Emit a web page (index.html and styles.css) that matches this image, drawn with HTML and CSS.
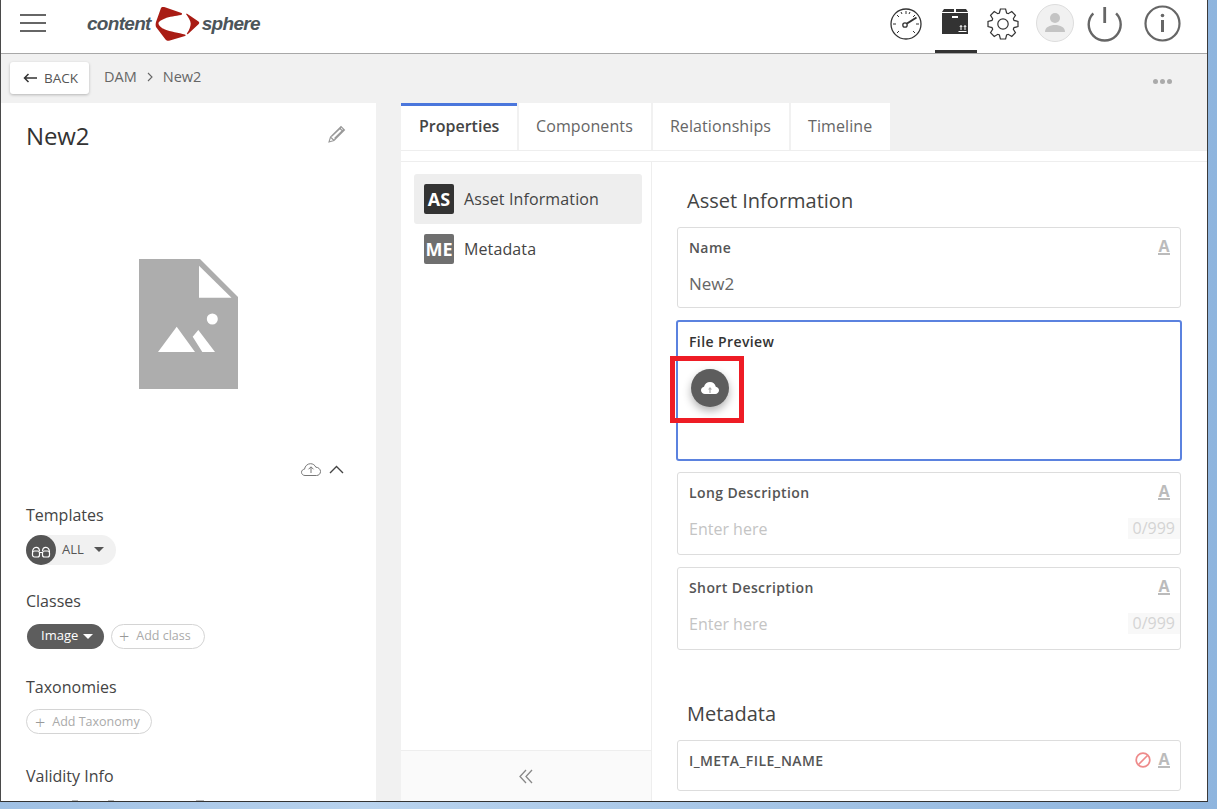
FILE: index.html
```html
<!DOCTYPE html>
<html lang="en">
<head>
<meta charset="utf-8">
<title>DAM - New2</title>
<link rel="stylesheet" href="styles.css">
</head>
<body>
<div class="app">
  <header class="topbar">
    <button class="burger" aria-label="Menu"><span></span><span></span><span></span></button>
    <div class="logo">
      <span class="logo-text">content</span>
      <svg class="logo-mark" width="50" height="36" viewBox="0 0 50 36"><path fill="#a91c14" d="M9.700 1.300C10.500.8 12 1 13 1.300L29.500 7C30.500 7.500 30 8.700 29 9 24 10 17 10.500 13 12.500 8 14.500 6.500 16 6.500 17.500 6.500 19 9 22 13 23.500 18 25.500 27 27 33 28.500 34 29 33.700 29.800 33 30L17 34.700C15.500 35 14.500 34.500 13.500 33.500L4 21C3.500 19.500 3.500 18 4 16L9 2z"/><path fill="#a91c14" d="M34 8C34 7.500 34.800 7.500 35.500 8L46.500 15.500C47.500 16.300 47.500 17.300 46.500 18.200L36 28C35 28.600 34.800 28 35 27.300 37.500 24 38.700 20 38.700 17.500 38.700 14.500 36 11 34 8z"/></svg>
      <span class="logo-text">sphere</span>
    </div>
    <nav class="topicons">
      <svg class="ic-gauge" width="34" height="34" viewBox="0 0 34 34" fill="none" stroke="#333" stroke-width="1.300"><circle cx="17" cy="17" r="15"/><path d="M17 4v3M8 8l2 2M4 17h3M27 17h3M26 8l-2 2M8 26l2-2M26 26l-2-2M21 5l-1 2M12 5l1 2" stroke-width="1"/><circle cx="16" cy="18" r="2.200"/><path d="M18 16.500l9.500-6" stroke-width="2"/></svg>
      <div class="tab-dam">
        <svg width="28" height="28" viewBox="0 0 28 28"><path fill="#333" d="M3 1h10v3H1zM15 1h10l2 3H15zM1 5h26v21H1z"/><path fill="#fff" d="M11 8h6v2h-6z"/><path fill="none" stroke="#fff" stroke-width="1" d="M17.500 23.500h8M20 22v-4.500M24 22v-4.500M18.800 19l1.200-1.500 1.200 1.500M22.800 19l1.200-1.500 1.200 1.500"/></svg>
      </div>
      <svg class="ic-gear" width="32" height="32" viewBox="0 0 32 32" fill="none" stroke="#333" stroke-width="1.200"><circle cx="16" cy="16" r="5.200"/><polygon points="12.400,5 13.400,1 18.600,1 19.600,5 21.230,5.680 24.770,3.550 28.450,7.230 26.320,10.770 27,12.400 31,13.400 31,18.600 27,19.600 26.320,21.230 28.450,24.770 24.770,28.450 21.230,26.320 19.600,27 18.600,31 13.400,31 12.400,27 10.770,26.320 7.230,28.450 3.550,24.770 5.680,21.230 5,19.600 1,18.600 1,13.400 5,12.400 5.680,10.770 3.550,7.230 7.230,3.550 10.770,5.680"/></svg>
      <div class="avatar"><svg width="24" height="24" viewBox="0 0 24 24" fill="#c4c4c4"><circle cx="12" cy="7" r="5"/><path d="M2 21c0-5 5-7 10-7s10 2 10 7z"/></svg></div>
      <svg class="ic-power" width="36" height="37" viewBox="0 0 36 37" fill="none" stroke="#666" stroke-width="2.400"><path d="M6.300 8.300A16 16 0 1 0 29.100 8.300"/><path d="M17.700 2v16" stroke-width="2.800"/></svg>
      <svg class="ic-info" width="37" height="37" viewBox="0 0 37 37" fill="none" stroke="#666" stroke-width="2.200"><circle cx="18.500" cy="18.500" r="17"/><path d="M18.500 15v12" stroke-width="3"/><circle cx="18.500" cy="10.500" r="1.800" fill="#666" stroke="none"/></svg>
    </nav>
  </header>

  <div class="crumbbar">
    <button class="back"><svg width="14" height="10" viewBox="0 0 14 10" fill="none" stroke="#333" stroke-width="1.500"><path d="M14 5H1.500M5.500 1 1.500 5l4 4"/></svg>BACK</button>
    <span class="crumb">DAM</span>
    <svg class="crumb-sep" width="6" height="10" viewBox="0 0 6 10" fill="none" stroke="#666" stroke-width="1.100"><path d="m1 1 4 4-4 4"/></svg>
    <span class="crumb">New2</span>
    <div class="dots"><i></i><i></i><i></i></div>
  </div>

  <main class="workspace">
    <aside class="leftpanel">
      <div class="title-row">
        <h1>New2</h1>
        <svg width="18" height="18" viewBox="0 0 18 18" fill="none" stroke="#999" stroke-width="1.100"><path d="M1 17l1.500-5L13 1.500l3.500 3.500L6 15.500zM2.500 12 6 15.500M11.500 3l3.500 3.500M4 11 13 2.500M6.500 13.500l9-9"/></svg>
      </div>
      <div class="preview">
        <svg width="99" height="130" viewBox="0 0 99 130"><path fill="#adadad" d="M0 0h61l38 38v92H0z"/><path fill="#fff" d="M60 6.700 92.500 38.700H60z"/><circle cx="73.300" cy="60" r="5.500" fill="#fff"/><path fill="#fff" d="M19 93 37.700 67.700 56 93zM53.700 77.700l5.600-6.700L76 93H63.300z"/></svg>
      </div>
      <div class="preview-tools">
        <svg width="20" height="13" viewBox="0 0 20 13" fill="none" stroke="#777" stroke-width="1"><path d="M4 12.500C2 12.500.5 11 .5 9.300s1.300-3 3-3.100C4 3 6.500.7 9.500.7c2.500 0 4.500 1.500 5.300 3.500 2.600 0 4.700 2 4.700 4.300 0 2.300-1.700 4-4 4zM10 10V4M7.500 6.300 10 3.800l2.500 2.500"/></svg>
        <svg width="15" height="9" viewBox="0 0 15 9" fill="none" stroke="#444" stroke-width="1.400"><path d="m1 8 6.500-6.500L14 8"/></svg>
      </div>
      <section class="meta-group g-templates">
        <h2>Templates</h2>
        <div class="template-pill">
          <span class="glasses"><svg width="20" height="13" viewBox="0 0 20 13" fill="none" stroke="#fff" stroke-width="1.200"><rect x="1.500" y="6" width="7" height="6" rx="2"/><rect x="11.500" y="6" width="7" height="6" rx="2"/><path d="M8.500 7.500h3M1.500 7C2 1 8 1 8.500 6M11.500 6C12 1 18 1 18.500 7"/></svg></span>
          <span class="pill-label">ALL</span><i class="caret"></i>
        </div>
      </section>
      <section class="meta-group g-classes">
        <h2>Classes</h2>
        <div class="chips">
          <span class="chip-dark">Image<i class="caret caret-white"></i></span>
          <span class="chip-add"><b>+</b>Add class</span>
        </div>
      </section>
      <section class="meta-group g-tax">
        <h2>Taxonomies</h2>
        <div class="chips chips-tax"><span class="chip-add tax"><b>+</b>Add Taxonomy</span></div>
      </section>
      <section class="meta-group">
        <h2>Validity Info</h2>
        <div class="validity"><i></i><i></i><i></i></div>
      </section>
    </aside>

    <section class="rightpanel">
      <div class="tabs">
        <div class="tab active">Properties</div>
        <div class="tab">Components</div>
        <div class="tab">Relationships</div>
        <div class="tab">Timeline</div>
      </div>
      <div class="tabstrip"></div>
      <div class="columns">
        <div class="sidelist">
          <div class="sideitems">
            <div class="sideitem selected"><span class="badge dark">AS</span>Asset Information</div>
            <div class="sideitem"><span class="badge">ME</span>Metadata</div>
          </div>
          <div class="collapse"><svg width="14" height="15" viewBox="0 0 14 15" fill="none" stroke="#888" stroke-width="1.300"><path d="M7 1 1 7.500 7 14M13 1 7 7.500l6 6.500"/></svg></div>
        </div>
        <div class="formcol">
          <h3>Asset Information</h3>
          <div class="field f-name">
            <div class="f-head"><label>Name</label><span class="a-ic">A</span></div>
            <div class="f-value">New2</div>
          </div>
          <div class="field f-file">
            <div class="f-head"><label>File Preview</label></div>
            <div class="fab"><svg width="18" height="12" viewBox="0 0 18 12"><path fill="#fff" d="M4 12C2 12 0 10.500 0 8.300 0 6.500 1.300 5 3 4.800 3.800 2 6 0 9 0c2.900 0 5.200 2 5.800 4.700 1.800.3 3.200 1.800 3.200 3.600 0 2-1.600 3.700-3.700 3.700z"/><path fill="#aaa" d="M9 5 7 7.500h1.400V11h1.200V7.500H11z"/></svg></div>
          </div>
          <div class="field f-text">
            <div class="f-head"><label>Long Description</label><span class="a-ic">A</span></div>
            <div class="f-row"><span class="placeholder">Enter here</span><span class="count">0/999</span></div>
          </div>
          <div class="field f-text">
            <div class="f-head"><label>Short Description</label><span class="a-ic">A</span></div>
            <div class="f-row"><span class="placeholder">Enter here</span><span class="count">0/999</span></div>
          </div>
          <h3 class="h-meta">Metadata</h3>
          <div class="field f-meta">
            <div class="f-head"><label>I_META_FILE_NAME</label><span class="f-icons"><svg width="16" height="16" viewBox="0 0 16 16" fill="none" stroke="#ee8b8b" stroke-width="1.700"><circle cx="8" cy="8" r="6.800"/><path d="M3.500 12.500l9-9"/></svg><span class="a-ic">A</span></span></div>
          </div>
        </div>
      </div>
    </section>
  </main>
  <div class="annotation" aria-hidden="true"></div>
</div>
</body>
</html>
```

FILE: styles.css
```css
* { box-sizing: border-box; }
html, body { height: 100%; }
body {
  margin: 0;
  height: 809px;
  overflow: hidden;
  background: linear-gradient(90deg, #9fc0e4, #b9d3ee 30%, #8fb5de);
  font-family: "Open Sans", "Noto Sans", sans-serif;
  color: #333;
}
.app {
  position: relative;
  width: 1208px;
  height: 802px;
  background: #f1f1f1;
  border-left: 1px solid #4a4a4a;
  border-right: 1px solid #3a3a3a;
  border-bottom: 1px solid #333;
  display: flex;
  flex-direction: column;
  overflow: hidden;
}
.topbar {
  height: 54px;
  flex: none;
  background: #fff;
  border-bottom: 1px solid #a8a8a8;
  display: flex;
  align-items: center;
  padding-left: 19px;
}
.burger {
  width: 26px;
  height: 18px;
  padding: 0;
  border: 0;
  background: none;
  display: flex;
  flex-direction: column;
  justify-content: space-between;
  margin-bottom: 7px;
}
.burger span { display: block; height: 2px; background: #666; }
.logo {
  display: flex;
  align-items: center;
  margin-left: 41px;
  margin-bottom: 5px;
}
.logo-text {
  font-family: "Liberation Sans", sans-serif;
  font-style: italic;
  font-weight: 700;
  font-size: 19px;
  letter-spacing: -0.7px;
  color: #4c555a;
}
.logo-mark { margin: 0 0 0 1px; }
.topicons {
  margin-left: auto;
  width: 318px;
  height: 53px;
  display: flex;
  align-items: flex-start;
  padding-top: 7px;
}
.ic-gauge { flex: none; }
.tab-dam {
  width: 42px;
  height: 53px;
  margin-left: 12px;
  margin-top: -7px;
  padding: 8px 0 0 6px;
  border-bottom: 3px solid #333;
  flex: none;
  overflow: hidden;
}
.tab-dam svg { display: block; }
.ic-gear { margin-left: 10px; margin-top: 1px; flex: none; }
.avatar {
  width: 38px;
  height: 38px;
  border-radius: 50%;
  background: #f1f1f1;
  border: 1px solid #ddd;
  margin-left: 17px;
  margin-top: -3px;
  display: flex;
  align-items: center;
  justify-content: center;
  flex: none;
}
.ic-power { margin-left: 13px; margin-top: -2px; flex: none; }
.ic-info { margin-left: 21px; margin-top: -2px; flex: none; }

.crumbbar {
  height: 49px;
  flex: none;
  display: flex;
  align-items: center;
  padding-left: 9px;
  padding-right: 35px;
  font-size: 14.500px;
  color: #666;
}
.back {
  width: 79px;
  height: 32px;
  position: relative;
  top: -1px;
  background: #fff;
  border: 0;
  border-radius: 3px;
  box-shadow: 0 1px 3px rgba(0, 0, 0, .25);
  font: 13.500px "Open Sans", sans-serif;
  color: #555;
  display: flex;
  align-items: center;
  gap: 7px;
  padding: 0 0 0 13px;
  margin-right: 15px;
}
.crumb { position: relative; top: -2px; }
.crumb-sep { margin: 0 10px 0 10px; position: relative; top: -2px; }
.dots { margin-left: auto; display: flex; gap: 2px; position: relative; top: 3px; }
.dots i { width: 5px; height: 5px; border-radius: 50%; background: #aaa; }

.workspace { flex: 1; min-height: 0; display: flex; }
.leftpanel {
  width: 375px;
  flex: none;
  background: #fff;
  padding: 0 26px 0 25px;
  overflow: hidden;
}
.title-row {
  display: flex;
  justify-content: space-between;
  padding-top: 16px;
  height: 156px;
  align-items: flex-start;
}
.title-row h1 { margin: 0; font-size: 24px; font-weight: 400; line-height: 33px; letter-spacing: -.1px; color: #333; }
.title-row svg { margin: 6px 4px 0 0; }
.preview { padding-left: 113px; height: 200px; }
.preview svg { display: block; }
.preview-tools {
  display: flex;
  justify-content: flex-end;
  align-items: center;
  gap: 8px;
  height: 14px;
  padding-right: 6px;
  margin-top: 3px;
  margin-bottom: 28px;
}
.meta-group { margin-bottom: 21px; }
.meta-group h2 { margin: 0; font-size: 16px; font-weight: 400; line-height: 22px; color: #444; }
.g-templates { margin-bottom: 25px; }
.g-classes { margin-bottom: 27px; }
.g-tax { margin-bottom: 31px; }
.template-pill {
  margin-top: 9px;
  width: 90px;
  height: 30px;
  border-radius: 15px;
  background: #f1f1f1;
  display: flex;
  align-items: center;
  font-size: 13px;
  color: #555;
}
.pill-label { margin-bottom: 2px; }
.glasses {
  width: 30px;
  height: 30px;
  border-radius: 50%;
  background: #555;
  display: flex;
  align-items: center;
  justify-content: center;
  margin-right: 6px;
  padding-top: 2px;
}
.caret {
  display: inline-block;
  width: 0;
  height: 0;
  border: 5px solid transparent;
  border-top: 5px solid #555;
  border-bottom: 0;
  margin: 0 0 2px 10px;
}
.caret-white { border-top-color: #fff; margin: 3px 0 0 5px; }
.chips { display: flex; gap: 7px; margin-top: 12px; height: 25px; }
.chips-tax { margin-top: 11px; }
.chip-dark {
  height: 25px;
  width: 77px;
  margin-left: 1px;
  border-radius: 13px;
  background: #5d5d5d;
  color: #fff;
  font-size: 13px;
  display: flex;
  align-items: center;
  padding: 0 0 3px 14px;
}
.chip-add {
  height: 25px;
  width: 94px;
  border: 1px solid #d4d4d4;
  border-radius: 13px;
  color: #aaa;
  font-size: 12.500px;
  display: flex;
  align-items: center;
  padding: 0 0 2px 7px;
}
.chip-add b { font-weight: 300; font-size: 18px; line-height: 18px; margin-right: 7px; color: #999; }
.chip-add.tax { width: 126px; padding: 0 0 0 8px; }
.validity { display: flex; margin-top: 13px; padding-left: 46px; }
.validity i { display: block; width: 6px; height: 2px; background: #bbb; }
.validity i + i { margin-left: 30px; }
.validity i:last-child { margin-left: 82px; width: 8px; }

.rightpanel {
  margin-left: 25px;
  width: 806px;
  flex: none;
  display: flex;
  flex-direction: column;
  background: #fff;
}
.tabs { display: flex; gap: 2px; height: 47px; flex: none; background: #f1f1f1; }
.tab {
  background: #fff;
  padding: 0 18px 2px 17px;
  display: flex;
  align-items: center;
  font-size: 16px;
  letter-spacing: .1px;
  color: #666;
}
.tab.active {
  border-top: 3px solid #4a76dc;
  font-weight: 600;
  color: #444;
  padding: 0 18px 5px;
  width: 116px;
  letter-spacing: 0;
}
.tabstrip { height: 12px; flex: none; border-top: 1px solid #eee; border-bottom: 1px solid #eee; }
.columns { flex: 1; min-height: 0; display: flex; }
.sidelist {
  width: 251px;
  flex: none;
  border-right: 1px solid #eee;
  display: flex;
  flex-direction: column;
}
.sideitems { flex: 1; padding: 12px 9px 0 13px; }
.sideitem {
  height: 50px;
  display: flex;
  align-items: center;
  padding-left: 10px;
  font-size: 16px;
  letter-spacing: .12px;
  color: #444;
  border-radius: 3px;
}
.sideitem.selected { background: #eee; }
.badge {
  width: 30px;
  height: 30px;
  border-radius: 2px;
  background: #6f6f6f;
  color: #fff;
  font-weight: 700;
  font-size: 18px;
  letter-spacing: 0;
  display: flex;
  align-items: center;
  justify-content: center;
  margin-right: 10px;
}
.badge.dark { background: #333; }
.collapse {
  height: 51px;
  flex: none;
  border-top: 1px solid #eee;
  background: #fafafa;
  display: flex;
  align-items: center;
  justify-content: center;
}
.formcol { flex: 1; padding: 0 26px 0 25px; overflow: hidden; }
.formcol h3 {
  margin: 0;
  padding-left: 10px;
  font-size: 20px;
  font-weight: 400;
  line-height: 27px;
  color: #444;
  padding-top: 25px;
  height: 65px;
}
.formcol h3.h-meta { height: 78px; padding-top: 38px; }
.field {
  border: 1px solid #ddd;
  border-radius: 3px;
  background: #fff;
  padding: 9px 5px 0 11px;
  margin-bottom: 12px;
}
.f-head { display: flex; justify-content: space-between; align-items: center; height: 20px; }
.f-head label { font-size: 14px; font-weight: 600; letter-spacing: .4px; color: #555; }
.a-ic {
  font-size: 16px;
  font-weight: 700;
  line-height: 13px;
  color: #bbb;
  border-bottom: 2px solid #bbb;
  width: 12px;
  text-align: center;
  margin-right: 5px;
}
.f-icons { display: flex; align-items: center; gap: 7px; }
.f-name { height: 81px; }
.f-value { margin-top: 15px; font-size: 17px; color: #666; }
.f-file {
  height: 141px;
  border: 2px solid #5b82df;
  margin: 0 -1px 11px -1px;
  padding: 9px 6px 0 11px;
}
.f-file label { color: #333; }
.fab {
  width: 38px;
  height: 38px;
  border-radius: 50%;
  background: #5d5d5d;
  box-shadow: 0 4px 8px rgba(0, 0, 0, .3);
  display: flex;
  align-items: center;
  justify-content: center;
  margin: 18px 0 0 2px;
}
.f-text { height: 83px; padding-right: 0; margin-bottom: 12px; }
.f-text .a-ic { margin-right: 10px; }
.f-row { display: flex; justify-content: space-between; align-items: center; margin-top: 16px; height: 21px; }
.placeholder { font-size: 16px; color: #c4c4c4; }
.count {
  font-size: 16px;
  color: #d4d4d4;
  background: #f8f8f8;
  padding: 0 5px 0 0;
  line-height: 21px;
  width: 52px;
  text-align: right;
}
.f-meta { height: 51px; padding-top: 9px; }
.annotation {
  position: absolute;
  left: 669px;
  top: 356px;
  width: 74px;
  height: 67px;
  border: 5px solid #ee1c25;
  pointer-events: none;
}
```
